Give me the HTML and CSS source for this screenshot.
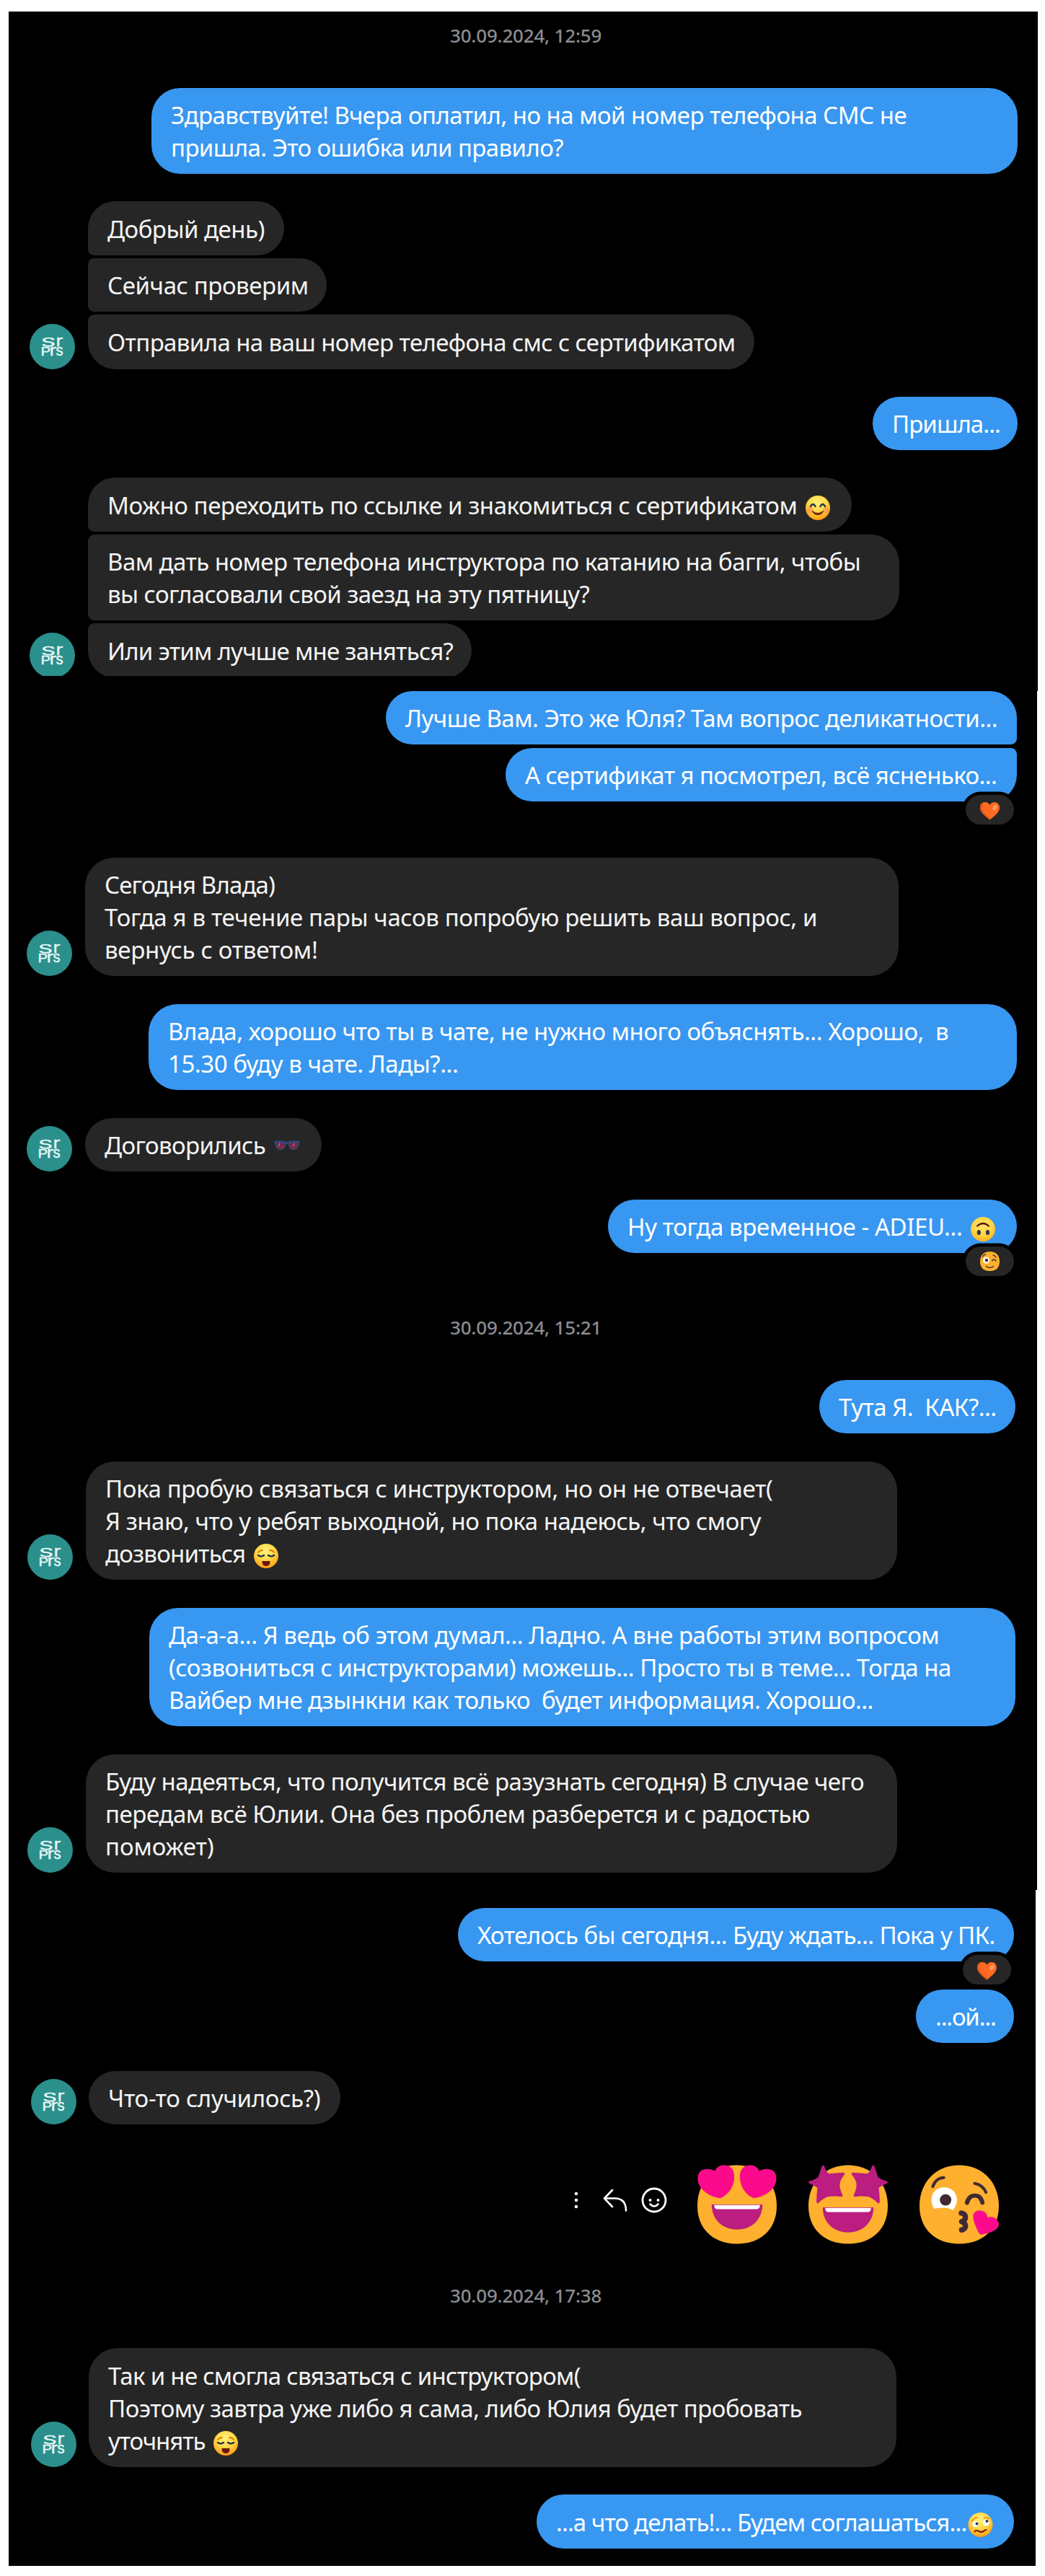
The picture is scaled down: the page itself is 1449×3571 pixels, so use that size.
FILE: index.html
```html
<!DOCTYPE html>
<html lang="ru">
<head>
<meta charset="utf-8">
<title>Переписка</title>
<link rel="stylesheet" href="styles.css">
</head>
<body>
<svg class="defs" aria-hidden="true">
  <defs>
    <radialGradient id="skin" cx=".48" cy=".3" r=".75">
      <stop offset="0" stop-color="#fff07a"/><stop offset=".45" stop-color="#ffdb4a"/><stop offset=".8" stop-color="#ffb01f"/><stop offset="1" stop-color="#f58a0c"/>
    </radialGradient>
    <radialGradient id="skin-flip" cx=".48" cy=".35" r=".75">
      <stop offset="0" stop-color="#ffe667"/><stop offset=".5" stop-color="#ffd745"/><stop offset=".85" stop-color="#ffb322"/><stop offset="1" stop-color="#f39a14"/>
    </radialGradient>
    <linearGradient id="lens" x1="0" y1="0" x2="0" y2="1">
      <stop offset="0" stop-color="#57304f"/><stop offset="1" stop-color="#a32024"/>
    </linearGradient>
    <symbol id="avatar" viewBox="0 0 63 63">
      <circle cx="31.5" cy="31.5" r="31.5" fill="#2b8f8c"/>
      <g fill="#e9f8f6" stroke="#e9f8f6" stroke-width=".3" font-family="Inter, 'Liberation Sans', sans-serif">
        <text x="16" y="31" font-size="16.5" textLength="20" lengthAdjust="spacingAndGlyphs">S</text>
        <text x="36.5" y="31" font-size="21.5" textLength="10" lengthAdjust="spacingAndGlyphs">r</text>
        <text x="15.300" y="43.800" font-size="16" textLength="14" lengthAdjust="spacingAndGlyphs">P</text>
        <text x="27.500" y="43.800" font-size="21.5" textLength="10" lengthAdjust="spacingAndGlyphs">r</text>
        <text x="36" y="43.800" font-size="20.5" textLength="11" lengthAdjust="spacingAndGlyphs">s</text>
      </g>
    </symbol>
    <symbol id="smiling" viewBox="0 0 34 34">
      <circle cx="17" cy="17" r="17" fill="url(#skin)"/>
      <circle cx="6" cy="20" r="4.5" fill="#ff7a5c" opacity=".45"/><circle cx="28" cy="20" r="4.5" fill="#ff7a5c" opacity=".45"/>
      <path d="M7 15q3.200-6 6.500 0M20.500 15q3.200-6 6.500 0" fill="none" stroke="#26334a" stroke-width="2.400" stroke-linecap="round"/>
      <path d="M9.500 21.500q7.500 6 15 0-1.500 5-7.500 5t-7.500-5z" fill="#7a1f14" stroke="#7a1f14" stroke-width="1" stroke-linejoin="round"/>
    </symbol>
    <symbol id="upside-down" viewBox="0 0 34 34">
      <circle cx="17" cy="17" r="17" fill="url(#skin-flip)"/>
      <path d="M9 12.500q8-7 16 0" fill="none" stroke="#5c1510" stroke-width="2.200" stroke-linecap="round"/>
      <ellipse cx="11.300" cy="21.500" rx="2.600" ry="3.600" fill="#2c3850"/><ellipse cx="23.500" cy="21.500" rx="2.600" ry="3.600" fill="#2c3850"/>
    </symbol>
    <symbol id="relieved" viewBox="0 0 34 34">
      <circle cx="17" cy="17" r="17" fill="url(#skin)"/>
      <path d="M6 12q2-3 6-3M28 12q-2-3-6-3" fill="none" stroke="#e07a10" stroke-width="1.800" stroke-linecap="round"/>
      <path d="M6 16q4 3 8 0M20 16q4 3 8 0" fill="none" stroke="#26334a" stroke-width="2.600" stroke-linecap="round"/>
      <path d="M11.500 24h11q.5 7-5.500 7t-5.500-7z" fill="#6b160f"/>
    </symbol>
    <symbol id="woozy" viewBox="0 0 34 34">
      <circle cx="17" cy="17" r="17" fill="url(#skin)"/>
      <path d="M5 12q3-5 8-5M22 8q4-3 7 1" fill="none" stroke="#e08a18" stroke-width="1.600" stroke-linecap="round"/>
      <circle cx="10" cy="16" r="4.300" fill="#fff"/><circle cx="25" cy="14" r="4.600" fill="#fff"/>
      <circle cx="12" cy="15.500" r="2" fill="#2c3850"/><circle cx="26" cy="12" r="2" fill="#2c3850"/>
      <path d="M9 26q3-2 6 0t6 0 4-2" fill="none" stroke="#7a1f14" stroke-width="2.200" stroke-linecap="round"/>
    </symbol>
    <symbol id="sunglasses" viewBox="0 0 36 14">
      <path d="M0 1.500C6-.5 13 0 18 2.500 23 0 30-.5 36 1.500L34.500 6C33 12 29 13.500 25.500 13 21.500 12.500 20.500 8 19.500 5h-3C15.500 8 14.500 12.500 10.500 13 7 13.500 3 12 1.500 6z" fill="#2f4681"/>
      <path d="M3 3Q9 1.500 14.500 4 13.500 11.500 9.500 11.700 4.500 11.700 3 3zM33 3Q27 1.500 21.500 4 22.500 11.500 26.500 11.700 31.500 11.700 33 3z" fill="url(#lens)"/>
      <path d="M8 3.500 6.500 8M28 3.500 26.500 8" stroke="#a06a96" stroke-width="1.500"/>
    </symbol>
    <symbol id="heart" viewBox="0 0 27 25">
      <path d="M13.500 24.500C7 19 0 14.500 0 7.500 0 3 3 0 7 0q4.500 0 6.500 4Q15.500 0 20 0c4 0 7 3 7 7.500 0 7-7 11.500-13.500 17z" fill="#ff6a23"/>
      <path d="M0 7.500C0 14.500 7 19 13.500 24.500l1.500-1.300C9 18 3 14 2.800 7 2.800 4 4 1.500 6 0 2.500.2 0 3.300 0 7.500z" fill="#ea5514"/>
      <ellipse cx="20.500" cy="7.500" rx="2.800" ry="4.200" transform="rotate(25 20.500 7.500)" fill="#ff9b5e"/>
    </symbol>
    <symbol id="wink" viewBox="0 0 27 27">
      <path d="M13.500 0C22 0 27 5 27 14s-5.500 13-13.500 13S0 23 0 14 5 0 13.500 0z" fill="#ffb02e"/>
      <circle cx="8.500" cy="12" r="4.500" fill="#fff"/><circle cx="9" cy="12" r="2.200" fill="#402a32"/>
      <path d="M3.500 7q1-2.500 4-3M18 5q3 .5 4 3M16.500 13q2.500-4 5.500 0M8.500 20.500q5 3.500 10 0" fill="none" stroke="#402a32" stroke-width="1.400" stroke-linecap="round"/>
    </symbol>
    <path id="face" d="M55.500 0C88 0 111 24 111 57S88 110 55.500 110 0 90 0 57 23 0 55.500 0z" fill="#ffb02e"/>
    <path id="eye-heart" d="M24.500 8C28 1 34-1 41 .5 49 2 52 9 51.500 18 51 30 44 40 35 45q-3 2-7 .5C17 43 5 36 1.500 25-1 17 1 8 9 6q9-2 15.500 2z" fill="#fb0b8c"/>
    <path id="eye-star" d="M20.500 2Q24 12 28 13.500 38 13 49 12 42 21 42 27 42 34 46 42.500 38 41 26 42.500 18 46 13 51.500 13 41 14.500 31 9 27 2 24 11 22 15.500 17 17.500 10 20.500 2z" fill="#bb1d80" stroke="#bb1d80" stroke-width="3.500" stroke-linejoin="round"/>
    <g id="grin">
      <path d="M20 0H91C91 21 76 35 55.500 35S20 21 20 0z" fill="#bb1d80"/>
      <path d="M23.500 .8h64v.7q-.5 5-4.500 5H28q-4 0-4.500-5z" fill="#fff"/>
    </g>
  </defs>
</svg>

<main class="chat">
  <section class="panel panel-first">
    <div class="clip">
      <time class="date">30.09.2024, 12:59</time>
      <div class="turn outgoing after-date">
        <p class="bubble" style="width:1201px"><span class="line" style="letter-spacing:-.53px">Здравствуйте! Вчера оплатил, но на мой номер телефона СМС не</span><span class="line" style="letter-spacing:-.6px">пришла. Это ошибка или правило?</span></p>
      </div>
      <div class="turn incoming">
        <div class="stack">
          <p class="bubble" style="width:272px"><span class="line" style="letter-spacing:-.5px">Добрый день)</span></p>
          <p class="bubble" style="width:331px"><span class="line" style="letter-spacing:-.4px">Сейчас проверим</span></p>
          <p class="bubble tall" style="width:924px"><span class="line" style="letter-spacing:-.61px">Отправила на ваш номер телефона смс с сертификатом</span></p>
        </div>
        <svg class="avatar"><use href="#avatar"/></svg>
      </div>
      <div class="turn outgoing">
        <p class="bubble" style="width:201px"><span class="line" style="letter-spacing:-.95px">Пришла...</span></p>
      </div>
      <div class="turn incoming">
        <div class="stack">
          <p class="bubble" style="width:1059px"><span class="line" style="letter-spacing:-.46px">Можно переходить по ссылке и знакомиться с сертификатом</span><svg class="emoji"><use href="#smiling"/></svg></p>
          <p class="bubble" style="width:1125px"><span class="line" style="letter-spacing:-.55px">Вам дать номер телефона инструктора по катанию на багги, чтобы</span><span class="line" style="letter-spacing:-.56px">вы согласовали свой заезд на эту пятницу?</span></p>
          <p class="bubble tall" style="width:532px"><span class="line" style="letter-spacing:-.74px">Или этим лучше мне заняться?</span></p>
        </div>
        <svg class="avatar"><use href="#avatar"/></svg>
      </div>
    </div>
  </section>

  <section class="panel panel-second">
    <div class="turn outgoing flush">
      <div class="stack">
        <p class="bubble" style="width:875px"><span class="line" style="letter-spacing:-.52px">Лучше Вам. Это же Юля? Там вопрос деликатности...</span></p>
        <p class="bubble" style="width:709px"><span class="line" style="letter-spacing:-.57px">А сертификат я посмотрел, всё ясненько...</span><span class="reaction"><svg class="react-heart"><use href="#heart"/></svg></span></p>
      </div>
    </div>
    <div class="turn incoming after-reaction">
      <p class="bubble" style="width:1128px"><span class="line" style="letter-spacing:-.85px">Сегодня Влада)</span><span class="line" style="letter-spacing:-.36px">Тогда я в течение пары часов попробую решить ваш вопрос, и</span><span class="line" style="letter-spacing:-.28px">вернусь с ответом!</span></p>
      <svg class="avatar"><use href="#avatar"/></svg>
    </div>
    <div class="turn outgoing">
      <p class="bubble" style="width:1204px"><span class="line" style="letter-spacing:-.47px">Влада, хорошо что ты в чате, не нужно много объяснять... Хорошо,  в</span><span class="line" style="letter-spacing:-.46px">15.30 буду в чате. Лады?...</span></p>
    </div>
    <div class="turn incoming">
      <p class="bubble" style="width:328px"><span class="line" style="letter-spacing:-.6px">Договорились</span><svg class="emoji glasses"><use href="#sunglasses"/></svg></p>
      <svg class="avatar"><use href="#avatar"/></svg>
    </div>
    <div class="turn outgoing">
      <p class="bubble" style="width:567px"><span class="line" style="letter-spacing:-.39px">Ну тогда временное - ADIEU...</span><svg class="emoji"><use href="#upside-down"/></svg><span class="reaction"><svg class="react-wink"><use href="#wink"/></svg></span></p>
    </div>
    <time class="date date-late">30.09.2024, 15:21</time>
    <div class="turn outgoing after-date inset">
      <p class="bubble" style="width:272px"><span class="line" style="letter-spacing:-.52px">Тута Я.  КАК?...</span></p>
    </div>
    <div class="turn incoming inset">
      <p class="bubble" style="width:1125px"><span class="line" style="letter-spacing:-.37px">Пока пробую связаться с инструктором, но он не отвечает(</span><span class="line" style="letter-spacing:-.47px">Я знаю, что у ребят выходной, но пока надеюсь, что смогу</span><span class="line" style="letter-spacing:-.8px">дозвониться</span><svg class="emoji"><use href="#relieved"/></svg></p>
      <svg class="avatar"><use href="#avatar"/></svg>
    </div>
    <div class="turn outgoing inset">
      <p class="bubble" style="width:1201px"><span class="line" style="letter-spacing:-.48px">Да-а-а... Я ведь об этом думал... Ладно. А вне работы этим вопросом</span><span class="line" style="letter-spacing:-.54px">(созвониться с инструкторами) можешь... Просто ты в теме... Тогда на</span><span class="line" style="letter-spacing:-.56px">Вайбер мне дзынкни как только  будет информация. Хорошо...</span></p>
    </div>
    <div class="turn incoming inset">
      <p class="bubble" style="width:1125px"><span class="line" style="letter-spacing:-.59px">Буду надеяться, что получится всё разузнать сегодня) В случае чего</span><span class="line" style="letter-spacing:-.45px">передам всё Юлии. Она без проблем разберется и с радостью</span><span class="line" style="letter-spacing:-.1px">поможет)</span></p>
      <svg class="avatar"><use href="#avatar"/></svg>
    </div>
  </section>

  <section class="panel panel-third">
    <div class="turn outgoing">
      <p class="bubble" style="width:771px"><span class="line" style="letter-spacing:-.62px">Хотелось бы сегодня... Буду ждать... Пока у ПК.</span><span class="reaction"><svg class="react-heart"><use href="#heart"/></svg></span></p>
    </div>
    <div class="turn outgoing">
      <p class="bubble" style="width:136px"><span class="line" style="letter-spacing:-1.2px">...ой...</span></p>
    </div>
    <div class="turn incoming">
      <p class="bubble" style="width:349px"><span class="line" style="letter-spacing:-.3px">Что-то случилось?)</span></p>
      <svg class="avatar"><use href="#avatar"/></svg>
    </div>
    <div class="stickers">
      <div class="actions">
        <svg width="8" height="34" viewBox="0 0 8 34"><g fill="#fff"><circle cx="4" cy="8" r="2.300"/><circle cx="4" cy="17" r="2.300"/><circle cx="4" cy="26" r="2.300"/></g></svg>
        <svg width="34" height="34" viewBox="0 0 34 34"><path d="M13 3 2 14.500 13 26M2 14.500h16q14 1 14 17" fill="none" stroke="#fff" stroke-width="2.600" stroke-linecap="round" stroke-linejoin="round"/></svg>
        <svg width="36" height="36" viewBox="0 0 36 36"><circle cx="18" cy="18" r="16" fill="none" stroke="#fff" stroke-width="2.800"/><g fill="#fff"><circle cx="12.500" cy="18" r="2"/><circle cx="23.500" cy="18" r="2"/></g><path d="M12.500 23.500q5.500 6 11 0" fill="none" stroke="#fff" stroke-width="2.600" stroke-linecap="round"/></svg>
      </div>
      <svg class="sticker" viewBox="0 0 111 110"><use href="#face"/><use href="#eye-heart"/><use href="#eye-heart" transform="translate(111 0) scale(-1 1)"/><use href="#grin" y="55"/></svg>
      <svg class="sticker" viewBox="0 0 111 110"><use href="#face"/><use href="#eye-star"/><use href="#eye-star" transform="translate(111 0) scale(-1 1)"/><use href="#grin" y="59"/></svg>
      <svg class="sticker" viewBox="0 0 111 110"><use href="#face"/>
        <path d="M17 52C15 40 23 31 34.500 31S54 40 52 52q-1 6-5.500 11-6-4-13-3.500-7.500 0-13 1.500-2.500-4-3.500-9z" fill="#fff"/>
        <circle cx="36.500" cy="48.500" r="8" fill="#402a32"/>
        <path d="M18.500 30Q23 18 34 17.500M77 25.500Q88 27 93 38" fill="none" stroke="#402a32" stroke-width="4" stroke-linecap="round"/>
        <path d="M66.500 52.500Q69 42.500 77.500 42.500T88 52.500" fill="none" stroke="#402a32" stroke-width="6" stroke-linecap="round"/>
        <path d="M58.500 67C66 67.500 66 77.500 59 79c7 1.500 7 11 0 11.500" fill="none" stroke="#402a32" stroke-width="7.500" stroke-linecap="round" stroke-linejoin="round"/>
        <path d="M95 73.500C102 70 110 75 111 82 111 91 100 94 88 97q-4 .5-5.500-3C79 86 75 79 75 72c0-6 5-9 10.500-8.500 6 .5 9.500 5 9.500 10z" fill="#fb0b8c"/>
      </svg>
    </div>
    <time class="date date-last">30.09.2024, 17:38</time>
    <div class="turn incoming after-date">
      <p class="bubble" style="width:1120px"><span class="line" style="letter-spacing:-.7px">Так и не смогла связаться с инструктором(</span><span class="line" style="letter-spacing:-.52px">Поэтому завтра уже либо я сама, либо Юлия будет пробовать</span><span class="line" style="letter-spacing:-1.1px">уточнять</span><svg class="emoji"><use href="#relieved"/></svg></p>
      <svg class="avatar"><use href="#avatar"/></svg>
    </div>
    <div class="turn outgoing">
      <p class="bubble" style="width:662px"><span class="line" style="letter-spacing:-.9px">...а что делать!... Будем соглашаться...</span><svg class="emoji tight"><use href="#woozy"/></svg></p>
    </div>
  </section>
</main>
</body>
</html>
```
FILE: styles.css
```css
* { box-sizing: border-box; }

body {
  margin: 0;
  background: #fff;
  font-family: "Noto Sans", "Open Sans", sans-serif;
}

.defs { position: absolute; width: 0; height: 0; }

.chat { padding: 16px 0 14px 12px; }

.panel {
  background: #000;
  display: flow-root;
}
.panel-first { width: 1427px; height: 942px; --left: 29px; --right: 28px; --gap: 38px; --tie: 4px; }
.panel-second { width: 1426px; height: 1662px; --left: 25px; --right: 28px; --gap: 38.500px; --tie: 4.500px; }
.panel-third { width: 1424px; height: 937px; padding-top: 25px; --left: 31px; --right: 30px; --gap: 38.500px; --tie: 4.500px; }

.clip {
  height: 921px;
  overflow: hidden;
  display: flow-root;
}

.date {
  display: block;
  margin-top: 15px;
  padding-left: 612px;
  font-size: 26px;
  font-weight: 500;
  line-height: 36px;
  letter-spacing: -.2px;
  color: #8b8c90;
}
.date-late { margin-top: 84.500px; }
.date-last { margin-top: 53px; }

.turn {
  display: flex;
  margin-top: var(--gap);
}
.turn.after-date { margin-top: 55px; }
.turn.flush, .panel-third .turn:first-child { margin-top: 0; }
.turn.after-reaction { margin-top: 77.500px; }

.outgoing {
  justify-content: flex-end;
  padding-right: var(--right);
}
.outgoing.inset { padding-right: 30px; }

.incoming {
  flex-direction: row-reverse;
  justify-content: flex-end;
  align-items: flex-end;
  gap: 18px;
  padding-left: var(--left);
}
.incoming.inset { padding-left: 26px; }
.panel-third .incoming { gap: 17px; }

.stack {
  display: flex;
  flex-direction: column;
  gap: var(--tie);
}
.outgoing .stack { align-items: flex-end; }

.bubble {
  position: relative;
  margin: 0;
  padding: 15.200px 27px 14.300px;
  border-radius: 40px;
  font-size: 33px;
  line-height: 45px;
  white-space: nowrap;
}
.bubble.tall { padding-bottom: 15.300px; }
.outgoing .bubble { background: #3897f1; color: #fff; }
.incoming .bubble { background: #262626; color: #f4f4f4; }

.incoming .stack .bubble:not(:last-child) { border-bottom-left-radius: 9px; }
.incoming .stack .bubble:not(:first-child) { border-top-left-radius: 9px; }
.outgoing .stack .bubble:not(:last-child) { border-bottom-right-radius: 9px; }
.outgoing .stack .bubble:not(:first-child) { border-top-right-radius: 9px; }

.line { white-space: pre; }
.line + .line::before { content: "\A"; }

.avatar {
  flex: none;
  width: 63px;
  height: 63px;
}

.emoji {
  width: 34px;
  height: 34px;
  margin-left: 12px;
  margin-bottom: -8px;
  vertical-align: baseline;
}
.emoji.glasses { width: 36px; height: 14px; margin-bottom: 5px; }
.emoji.tight { width: 35px; margin-left: 2px; }

.reaction {
  position: absolute;
  right: 4px;
  bottom: -32px;
  width: 67px;
  height: 41px;
  display: flex;
  align-items: center;
  justify-content: center;
  border-radius: 21px;
  background: #262626;
  box-shadow: 0 0 0 4.500px #000;
}
.react-heart { width: 27px; height: 25px; margin-top: 4px; }
.react-wink { width: 27px; height: 27px; }

.stickers {
  display: flex;
  justify-content: flex-end;
  gap: 44px;
  margin-top: 56px;
  padding-right: 51px;
}
.sticker { width: 110px; height: 110px; }

.actions {
  display: flex;
  align-items: center;
  height: 98px;
  margin-right: -2px;
}
.actions svg + svg { margin-left: 33px; }
.actions svg:last-child { margin-left: 19px; }
```
